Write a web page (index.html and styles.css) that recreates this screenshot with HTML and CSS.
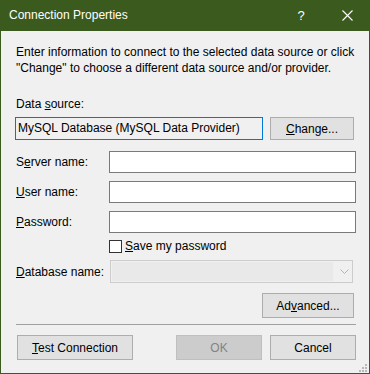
FILE: index.html
```html
<!DOCTYPE html>
<html>
<head>
<meta charset="utf-8">
<link rel="stylesheet" href="styles.css">
</head>
<body>
<div class="window">
  <div class="titlebar">
    <span class="title">Connection Properties</span>
    <span class="tb-btn help">?</span>
    <span class="tb-btn close">
      <svg width="11" height="11" viewBox="0 0 11 11"><path d="M0.5 0.5 L10.5 10.5 M10.5 0.5 L0.5 10.5" stroke="#fff" stroke-width="1.1" fill="none"/></svg>
    </span>
  </div>
  <div class="content">
    <p class="intro">Enter information to connect to the selected data source or click "Change" to choose a different data source and/or provider.</p>
    <div class="ds-label">Data <u>s</u>ource:</div>
    <div class="ds-row">
      <div class="ds-box">MySQL Database (MySQL Data Provider)</div>
      <button class="btn change"><u>C</u>hange...</button>
    </div>
    <div class="form">
      <label class="lbl">S<u>e</u>rver name:</label>
      <div class="input"></div>
      <label class="lbl"><u>U</u>ser name:</label>
      <div class="input"></div>
      <label class="lbl"><u>P</u>assword:</label>
      <div class="input"></div>
      <div></div>
      <div class="check-row"><span class="checkbox"></span><span><u>S</u>ave my password</span></div>
      <label class="lbl db"><u>D</u>atabase name:</label>
      <div class="combo">
        <div class="combo-inner"></div>
        <svg class="chev" width="9" height="5" viewBox="0 0 9 5"><path d="M0.5 0.5 L4.5 4.5 L8.5 0.5" stroke="#b4b4b4" stroke-width="1" fill="none"/></svg>
      </div>
    </div>
    <div class="adv-row"><button class="btn adv">Ad<u>v</u>anced...</button></div>
    <div class="sep"></div>
    <div class="bottom-row">
      <button class="btn test"><u>T</u>est Connection</button>
      <span class="spacer"></span>
      <button class="btn ok" disabled>OK</button>
      <button class="btn cancel">Cancel</button>
    </div>
  </div>
  <svg class="grip" width="9" height="9" viewBox="0 0 9 9">
    <rect x="6" y="0" width="2" height="2" fill="#b8b8b8"/>
    <rect x="3" y="3" width="2" height="2" fill="#b8b8b8"/>
    <rect x="6" y="3" width="2" height="2" fill="#b8b8b8"/>
    <rect x="0" y="6" width="2" height="2" fill="#b8b8b8"/>
    <rect x="3" y="6" width="2" height="2" fill="#b8b8b8"/>
    <rect x="6" y="6" width="2" height="2" fill="#b8b8b8"/>
  </svg>
</div>
</body>
</html>
```

FILE: styles.css
```css
html, body {
  margin: 0;
  padding: 0;
}
body {
  width: 370px;
  height: 374px;
  overflow: hidden;
  font-family: "Liberation Sans", Arial, sans-serif;
  font-size: 12px;
  color: #000;
}
.window {
  position: relative;
  box-sizing: border-box;
  width: 370px;
  height: 374px;
  background: #f0f0f0;
  border: 1px solid #3b5a1e;
  border-top: none;
}
.titlebar {
  height: 31px;
  margin: 0 -1px;
  background: #3b5a1e;
  color: #fff;
  display: flex;
  align-items: center;
}
.title {
  flex: 1;
  padding-left: 9px;
  font-size: 12px;
  padding-bottom: 1px;
}
.tb-btn {
  width: 46px;
  height: 31px;
  display: flex;
  align-items: center;
  justify-content: center;
}
.help {
  font-size: 13px;
  padding-bottom: 1px;
}
.close svg {
  display: block;
  margin-bottom: 1px;
}
.content {
  padding: 0 13px 0 14px;
}
.intro {
  margin: 13px 0 0 1px;
  line-height: 16px;
}
.ds-label {
  margin-top: 20px;
  margin-left: 1px;
  line-height: 16px;
}
.ds-row {
  display: flex;
  margin-top: 5px;
  height: 23px;
}
.ds-box {
  box-sizing: border-box;
  width: 248px;
  height: 23px;
  border: 1px solid #0078d7;
  padding-left: 2px;
  line-height: 21px;
}
.btn {
  font-family: inherit;
  font-size: 12px;
  color: #000;
  box-sizing: border-box;
  background: #e1e1e1;
  border: 1px solid #adadad;
  padding: 0;
  margin: 0;
  border-radius: 0;
}
.change {
  width: 84px;
  height: 23px;
  margin-left: 7px;
}
.form {
  display: grid;
  grid-template-columns: 94px 247px;
  row-gap: 8px;
  margin-top: 11px;
}
.lbl {
  margin-left: 1px;
  align-self: center;
}
.input {
  box-sizing: border-box;
  height: 22px;
  background: #fff;
  border: 1px solid #7a7a7a;
}
.check-row {
  display: flex;
  align-items: center;
  gap: 3px;
  height: 14px;
  margin-top: -2px;
}
.checkbox {
  box-sizing: border-box;
  width: 13px;
  height: 13px;
  border: 1px solid #333;
  background: #fff;
}
.lbl.db {
  margin-top: -1px;
}
.combo {
  position: relative;
  box-sizing: border-box;
  width: 243px;
  height: 23px;
  margin-left: 1px;
  margin-top: -1px;
  border: 1px solid #cccccc;
  background: #f0f0f0;
  display: flex;
  align-items: center;
}
.combo-inner {
  width: 221px;
  height: 19px;
  margin-left: 1px;
  background: #e9e9e9;
}
.chev {
  margin-left: 7px;
}
.adv-row {
  display: flex;
  justify-content: flex-end;
  margin-top: 10px;
  padding-right: 2px;
}
.adv {
  width: 92px;
  height: 25px;
}
.sep {
  height: 1px;
  background: #a0a0a0;
  margin-top: 6px;
  margin-left: 1px;
}
.bottom-row {
  display: flex;
  margin-top: 10px;
  padding-left: 2px;
}
.spacer {
  flex: 1;
}
.test {
  width: 116px;
  height: 25px;
}
.ok {
  width: 86px;
  height: 25px;
  background: #cccccc;
  border-color: #bfbfbf;
  color: #838383;
}
.cancel {
  width: 86px;
  height: 25px;
  margin-left: 8px;
}
.grip {
  position: absolute;
  right: 1px;
  bottom: 0px;
}
```
